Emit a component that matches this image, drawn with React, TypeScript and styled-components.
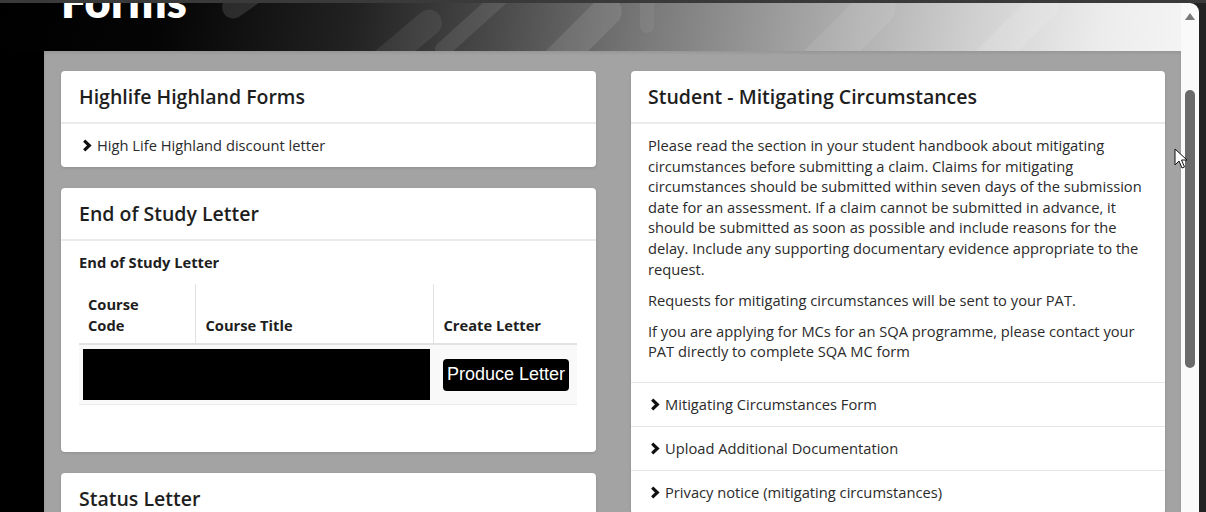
import React from "react";
import styled, { createGlobalStyle } from "styled-components";

const GlobalStyle = createGlobalStyle`
  html, body {
    margin: 0;
    padding: 0;
    width: 1206px;
    height: 512px;
    overflow: hidden;
    background: #262626;
    font-family: "Open Sans", "Noto Sans", sans-serif;
  }
  * { box-sizing: border-box; }
`;

const Screen = styled.div`
  position: relative;
  width: 1206px;
  height: 512px;
  padding: 3px 7px 0 0;
  background: linear-gradient(#3a3a3a, #3a3a3a) top / 100% 3px no-repeat, #222;
  display: flex;
`;

const Window = styled.div`
  flex: 1;
  display: flex;
  border-top-right-radius: 9px;
  overflow: hidden;
  background: #000;
`;

const Page = styled.div`
  flex: 1;
  display: flex;
  flex-direction: column;
  overflow: hidden;
  background: #000;
`;

const Header = styled.header`
  position: relative;
  height: 48px;
  flex: none;
  overflow: hidden;
  background: linear-gradient(
    100deg,
    #000 0%,
    #050505 14%,
    #222 30%,
    #4a4a4a 42%,
    #7a7a7a 55%,
    #a3a3a3 68%,
    #cfcfcf 82%,
    #ececec 93%,
    #f4f4f4 100%
  );
`;

const Streaks = styled.svg`
  position: absolute;
  inset: 0;
  width: 100%;
  height: 100%;
`;

const Title = styled.h1`
  position: relative;
  margin: -27px 0 0 61px;
  font-family: "Lato", "Open Sans", sans-serif;
  font-weight: 800;
  font-size: 45px;
  line-height: 50px;
  color: #fff;
  letter-spacing: 0.2px;
`;

const Content = styled.main`
  flex: 1;
  margin-left: 44px;
  background: #a3a3a3;
  padding: 20px 16px 0 17px;
  display: grid;
  grid-template-columns: 535px 534px;
  column-gap: 35px;
  align-items: start;
  overflow: hidden;
  box-shadow: inset 0 2px 3px rgba(0, 0, 0, 0.08);
`;

const Column = styled.div`
  display: flex;
  flex-direction: column;
  gap: 21px;
`;

const Card = styled.section`
  background: #fff;
  border-radius: 4px;
  box-shadow: 0 1px 3px rgba(0, 0, 0, 0.12);
  overflow: hidden;
`;

const CardHeader = styled.h2<{ $inset?: number }>`
  margin: 0;
  height: 53px;
  display: flex;
  align-items: center;
  padding: 0 ${(p) => p.$inset ?? 18}px;
  font-size: 19.5px;
  font-weight: 600;
  color: #1e1e1e;
  border-bottom: 2px solid #ebebeb;
`;

const CardBody = styled.div<{ $bottom?: number; $inset?: number }>`
  padding: 11px ${(p) => p.$inset ?? 18}px ${(p) => p.$bottom ?? 0}px;
  font-size: 14.7px;
  line-height: 20.6px;
  color: #2b2b2b;
`;

const LinkRow = styled.div<{ $divided?: boolean }>`
  display: flex;
  align-items: center;
  gap: 5px;
  padding: ${(p) => (p.$divided ? "11.2px 19px" : "11px 21px")};
  font-size: 14.7px;
  line-height: 20.6px;
  color: #2b2b2b;
  border-top: ${(p) => (p.$divided ? "1px solid #e6e6e6" : "none")};
`;

const Chevron = styled.svg`
  width: 10px;
  height: 13px;
  flex: none;
`;

const SubHeading = styled.h3`
  margin: 0 0 12px;
  font-size: 14.7px;
  font-weight: 700;
  line-height: 20.6px;
  color: #1e1e1e;
`;

const Table = styled.table`
  width: 498px;
  border-collapse: collapse;
  table-layout: fixed;
  font-size: 14.7px;
`;

const Th = styled.th<{ $w: number; $first?: boolean }>`
  width: ${(p) => p.$w}px;
  text-align: left;
  vertical-align: bottom;
  font-weight: 700;
  line-height: 20.6px;
  color: #1e1e1e;
  padding: ${(p) => (p.$first ? "10px 30px 8px 9px" : "10px 9px 8px 10px")};
  border-left: ${(p) => (p.$first ? "none" : "1px solid #e2e2e2")};
  border-bottom: 2px solid #e2e2e2;
`;

const BodyRow = styled.tr`
  background: #f9f9f9;
  border-bottom: 1px solid #ececec;
`;

const Td = styled.td<{ $pad: string }>`
  padding: ${(p) => p.$pad};
  vertical-align: middle;
`;

const Redacted = styled.div`
  height: 51px;
  background: #000;
`;

const ProduceButton = styled.button`
  height: 32px;
  width: 126px;
  padding: 0;
  border: none;
  border-radius: 4px;
  background: #000;
  color: #fff;
  font-family: "Liberation Sans", Arial, sans-serif;
  font-size: 18px;
  cursor: pointer;
`;

const Para = styled.p`
  margin: 0 0 10.4px;
`;

const Scrollbar = styled.div`
  width: 18px;
  flex: none;
  background: #fafafa;
  display: flex;
  flex-direction: column;
  align-items: center;
  padding-top: 10px;
`;

const UpArrow = styled.div`
  width: 0;
  height: 0;
  border-left: 5px solid transparent;
  border-right: 5px solid transparent;
  border-bottom: 7px solid #7a7a7a;
`;

const Thumb = styled.div`
  margin-top: 70px;
  width: 10px;
  height: 278px;
  border-radius: 5px;
  background: #6a6a6a;
`;

const Cursor = styled.svg`
  position: absolute;
  left: 1174px;
  top: 148px;
  width: 14px;
  height: 22px;
  pointer-events: none;
`;

const ChevronIcon = () => (
  <Chevron viewBox="0 0 10 13">
    <polyline
      points="2.2,1.7 7.3,6.5 2.2,11.3"
      fill="none"
      stroke="#111"
      strokeWidth="3.2"
      strokeLinecap="butt"
      strokeLinejoin="miter"
    />
  </Chevron>
);

const mcLinks = [
  "Mitigating Circumstances Form",
  "Upload Additional Documentation",
  "Privacy notice (mitigating circumstances)",
];

export default function App() {
  return (
    <>
      <GlobalStyle />
      <Screen>
        <Window>
          <Page>
            <Header>
              <Streaks viewBox="0 0 1181 48" preserveAspectRatio="none">
                <g fill="#fff">
                  <rect x="250" y="-60" width="22" height="90" rx="11" transform="rotate(55 261 -15)" opacity="0.12" />
                  <rect x="380" y="-10" width="26" height="120" rx="13" transform="rotate(50 393 50)" opacity="0.07" />
                  <rect x="470" y="-40" width="16" height="110" rx="8" transform="rotate(48 478 15)" opacity="0.09" />
                  <rect x="560" y="-20" width="30" height="120" rx="15" transform="rotate(45 575 40)" opacity="0.1" />
                  <rect x="640" y="-30" width="14" height="60" rx="7" opacity="0.06" />
                  <rect x="820" y="-30" width="40" height="140" rx="20" transform="rotate(45 840 40)" opacity="0.08" />
                  <rect x="990" y="-30" width="30" height="140" rx="15" transform="rotate(45 1005 40)" opacity="0.12" />
                </g>
              </Streaks>
              <Title>Forms</Title>
            </Header>
            <Content>
              <Column>
                <Card>
                  <CardHeader>Highlife Highland Forms</CardHeader>
                  <LinkRow>
                    <ChevronIcon />
                    High Life Highland discount letter
                  </LinkRow>
                </Card>
                <Card>
                  <CardHeader>End of Study Letter</CardHeader>
                  <CardBody $bottom={47}>
                    <SubHeading>End of Study Letter</SubHeading>
                    <Table>
                      <thead>
                        <tr>
                          <Th $w={116} $first>
                            Course Code
                          </Th>
                          <Th $w={238}>Course Title</Th>
                          <Th $w={144}>Create Letter</Th>
                        </tr>
                      </thead>
                      <tbody>
                        <BodyRow>
                          <Td colSpan={2} $pad="4px 3px 4px 4px">
                            <Redacted />
                          </Td>
                          <Td $pad="4px 8px 4px 10px">
                            <ProduceButton type="button">Produce Letter</ProduceButton>
                          </Td>
                        </BodyRow>
                      </tbody>
                    </Table>
                  </CardBody>
                </Card>
                <Card>
                  <CardHeader>Status Letter</CardHeader>
                  <LinkRow>
                    <ChevronIcon />
                    Status letter
                  </LinkRow>
                </Card>
              </Column>
              <Column>
                <Card>
                  <CardHeader $inset={17}>Student - Mitigating Circumstances</CardHeader>
                  <CardBody $inset={17} $bottom={10}>
                    <Para>
                      Please read the section in your student handbook about mitigating
                      circumstances before submitting a claim. Claims for mitigating
                      circumstances should be submitted within seven days of the submission
                      date for an assessment. If a claim cannot be submitted in advance, it
                      should be submitted as soon as possible and include reasons for the
                      delay. Include any supporting documentary evidence appropriate to the
                      request.
                    </Para>
                    <Para>Requests for mitigating circumstances will be sent to your PAT.</Para>
                    <Para>
                      If you are applying for MCs for an SQA programme, please contact your
                      PAT directly to complete SQA MC form
                    </Para>
                  </CardBody>
                  {mcLinks.map((label) => (
                    <LinkRow key={label} $divided>
                      <ChevronIcon />
                      {label}
                    </LinkRow>
                  ))}
                </Card>
              </Column>
            </Content>
          </Page>
          <Scrollbar>
            <UpArrow />
            <Thumb />
          </Scrollbar>
        </Window>
        <Cursor viewBox="0 0 14 22">
          <path d="M1 1 L1 17 L5 13 L8 20 L10.5 19 L7.5 12 L13 12 Z" fill="#fff" stroke="#111" strokeWidth="1" strokeLinejoin="round" />
        </Cursor>
      </Screen>
    </>
  );
}
